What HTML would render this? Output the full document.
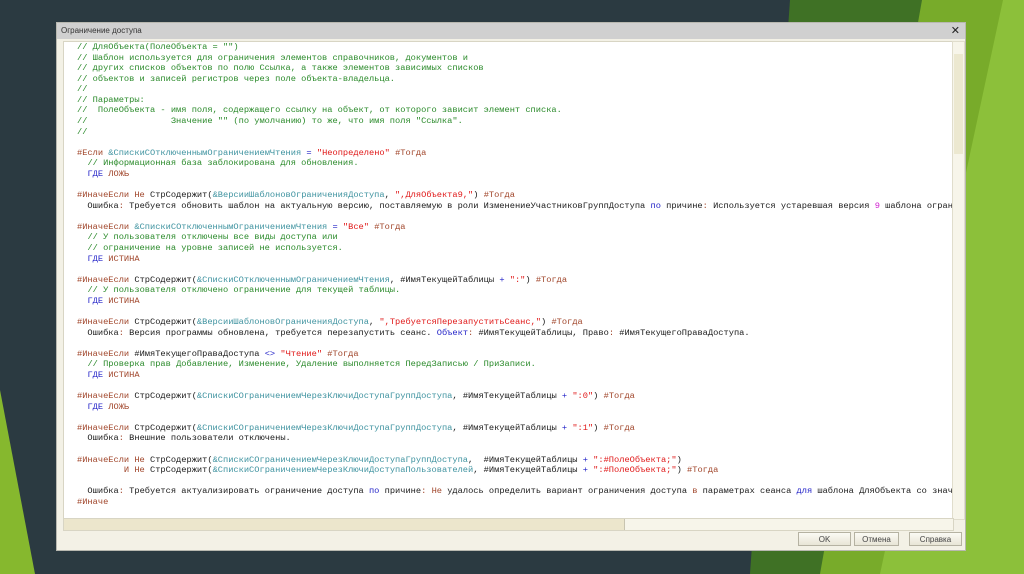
<!DOCTYPE html>
<html><head><meta charset="utf-8"><style>
body{margin:0;width:1024px;height:574px;overflow:hidden;background:#2b3a41;position:relative;font-family:"Liberation Sans",sans-serif}
.bg{position:absolute;left:0;top:0}
.dlg{position:absolute;left:56px;top:22px;width:910px;height:529px;background:#f3f1e6;border:1px solid #b8b8b0;box-sizing:border-box}
.title{position:absolute;left:0;top:0;width:100%;height:16px;background:#d0d0d0;font-size:8px;line-height:16px;padding-left:4px;color:#333;box-sizing:border-box}
.x{position:absolute;right:5px;top:0;font-size:11px;line-height:16px;color:#222}
.ed{position:absolute;left:6px;top:18px;width:889px;height:477px;background:#fff;border:1px solid #d8d5c4;overflow:hidden}
pre{margin:0;position:absolute;left:13px;top:0px;font-family:"Liberation Mono",monospace;font-size:8.7px;line-height:10.58px;color:#1a1a1a;white-space:pre}
.c{color:#2a8a2a}.k{color:#a0452a}.i{color:#3f93a0}.s{color:#e01818}.b{color:#2424c8}.m{color:#d020d0}
.vs{position:absolute;left:895px;top:18px;width:11px;height:477px;background:#f7f5ea;border:1px solid #e0ddcc}
.vt{position:absolute;left:1px;top:12px;width:9px;height:100px;background:#ece8d0}
.hs{position:absolute;left:6px;top:495px;width:889px;height:11px;background:#f7f5ea;border:1px solid #d8d5c4}
.ht{position:absolute;left:0;top:0;width:560px;height:11px;background:#ece6cc;border-right:1px solid #c8c4b0}
.btn{position:absolute;top:509px;height:14px;border:1px solid #b5b2a2;background:linear-gradient(#fbfaf4,#e8e5d6);font-size:8px;line-height:14px;text-align:center;color:#444;box-sizing:border-box}
</style></head><body>
<svg class="bg" width="1024" height="574">
<polygon points="790,0 922,0 900,574 750,574" fill="#3f7125"/>
<polygon points="922,0 1024,0 1024,574 820,574" fill="#78ab2a"/>
<polygon points="1003,0 1024,0 1024,574 880,574" fill="#8cc03a"/>
<polygon points="0,390 35,574 0,574" fill="#86b82e"/>
</svg>
<div class="dlg">
<div class="title">Ограничение доступа<span class="x">✕</span></div>
<div class="ed"><pre><span class="c">// ДляОбъекта(ПолеОбъекта = "")
// Шаблон используется для ограничения элементов справочников, документов и
// других списков объектов по полю Ссылка, а также элементов зависимых списков
// объектов и записей регистров через поле объекта-владельца.
//
// Параметры:
//  ПолеОбъекта - имя поля, содержащего ссылку на объект, от которого зависит элемент списка.
//                Значение "" (по умолчанию) то же, что имя поля "Ссылка".
//</span>

<span class="k">#Если</span> <span class="i">&amp;СпискиСОтключеннымОграничениемЧтения</span> <span class="b">=</span> <span class="s">"Неопределено"</span> <span class="k">#Тогда</span>
  <span class="c">// Информационная база заблокирована для обновления.</span>
  <span class="b">ГДЕ</span> <span class="k">ЛОЖЬ</span>

<span class="k">#ИначеЕсли Не</span> СтрСодержит(<span class="i">&amp;ВерсииШаблоновОграниченияДоступа</span>, <span class="s">",ДляОбъекта9,"</span>) <span class="k">#Тогда</span>
  Ошибка<span class="k">:</span> Требуется обновить шаблон на актуальную версию, поставляемую в роли ИзменениеУчастниковГруппДоступа <span class="b">по</span> причине<span class="k">:</span> Используется устаревшая версия <span class="m">9</span> шаблона ограничения

<span class="k">#ИначеЕсли</span> <span class="i">&amp;СпискиСОтключеннымОграничениемЧтения</span> <span class="b">=</span> <span class="s">"Все"</span> <span class="k">#Тогда</span>
  <span class="c">// У пользователя отключены все виды доступа или
  // ограничение на уровне записей не используется.</span>
  <span class="b">ГДЕ</span> <span class="k">ИСТИНА</span>

<span class="k">#ИначеЕсли</span> СтрСодержит(<span class="i">&amp;СпискиСОтключеннымОграничениемЧтения</span>, #ИмяТекущейТаблицы <span class="b">+</span> <span class="s">":"</span>) <span class="k">#Тогда</span>
  <span class="c">// У пользователя отключено ограничение для текущей таблицы.</span>
  <span class="b">ГДЕ</span> <span class="k">ИСТИНА</span>

<span class="k">#ИначеЕсли</span> СтрСодержит(<span class="i">&amp;ВерсииШаблоновОграниченияДоступа</span>, <span class="s">",ТребуетсяПерезапуститьСеанс,"</span>) <span class="k">#Тогда</span>
  Ошибка<span class="k">:</span> Версия программы обновлена, требуется перезапустить сеанс. <span class="b">Объект</span><span class="k">:</span> #ИмяТекущейТаблицы, Право<span class="k">:</span> #ИмяТекущегоПраваДоступа.

<span class="k">#ИначеЕсли</span> #ИмяТекущегоПраваДоступа <span class="b">&lt;&gt;</span> <span class="s">"Чтение"</span> <span class="k">#Тогда</span>
  <span class="c">// Проверка прав Добавление, Изменение, Удаление выполняется ПередЗаписью / ПриЗаписи.</span>
  <span class="b">ГДЕ</span> <span class="k">ИСТИНА</span>

<span class="k">#ИначеЕсли</span> СтрСодержит(<span class="i">&amp;СпискиСОграничениемЧерезКлючиДоступаГруппДоступа</span>, #ИмяТекущейТаблицы <span class="b">+</span> <span class="s">":0"</span>) <span class="k">#Тогда</span>
  <span class="b">ГДЕ</span> <span class="k">ЛОЖЬ</span>

<span class="k">#ИначеЕсли</span> СтрСодержит(<span class="i">&amp;СпискиСОграничениемЧерезКлючиДоступаГруппДоступа</span>, #ИмяТекущейТаблицы <span class="b">+</span> <span class="s">":1"</span>) <span class="k">#Тогда</span>
  Ошибка<span class="k">:</span> Внешние пользователи отключены.

<span class="k">#ИначеЕсли Не</span> СтрСодержит(<span class="i">&amp;СпискиСОграничениемЧерезКлючиДоступаГруппДоступа</span>,  #ИмяТекущейТаблицы <span class="b">+</span> <span class="s">":#ПолеОбъекта;"</span>)
         <span class="k">И Не</span> СтрСодержит(<span class="i">&amp;СпискиСОграничениемЧерезКлючиДоступаПользователей</span>, #ИмяТекущейТаблицы <span class="b">+</span> <span class="s">":#ПолеОбъекта;"</span>) <span class="k">#Тогда</span>

  Ошибка<span class="k">:</span> Требуется актуализировать ограничение доступа <span class="b">по</span> причине<span class="k">:</span> <span class="k">Не</span> удалось определить вариант ограничения доступа <span class="k">в</span> параметрах сеанса <span class="b">для</span> шаблона ДляОбъекта со значением
<span class="k">#Иначе</span></pre></div>
<div class="vs"><div class="vt"></div></div>
<div class="hs"><div class="ht"></div></div>
<div class="btn" style="left:741px;width:53px">OK</div>
<div class="btn" style="left:797px;width:45px">Отмена</div>
<div class="btn" style="left:852px;width:53px">Справка</div>
</div>
</body></html>
